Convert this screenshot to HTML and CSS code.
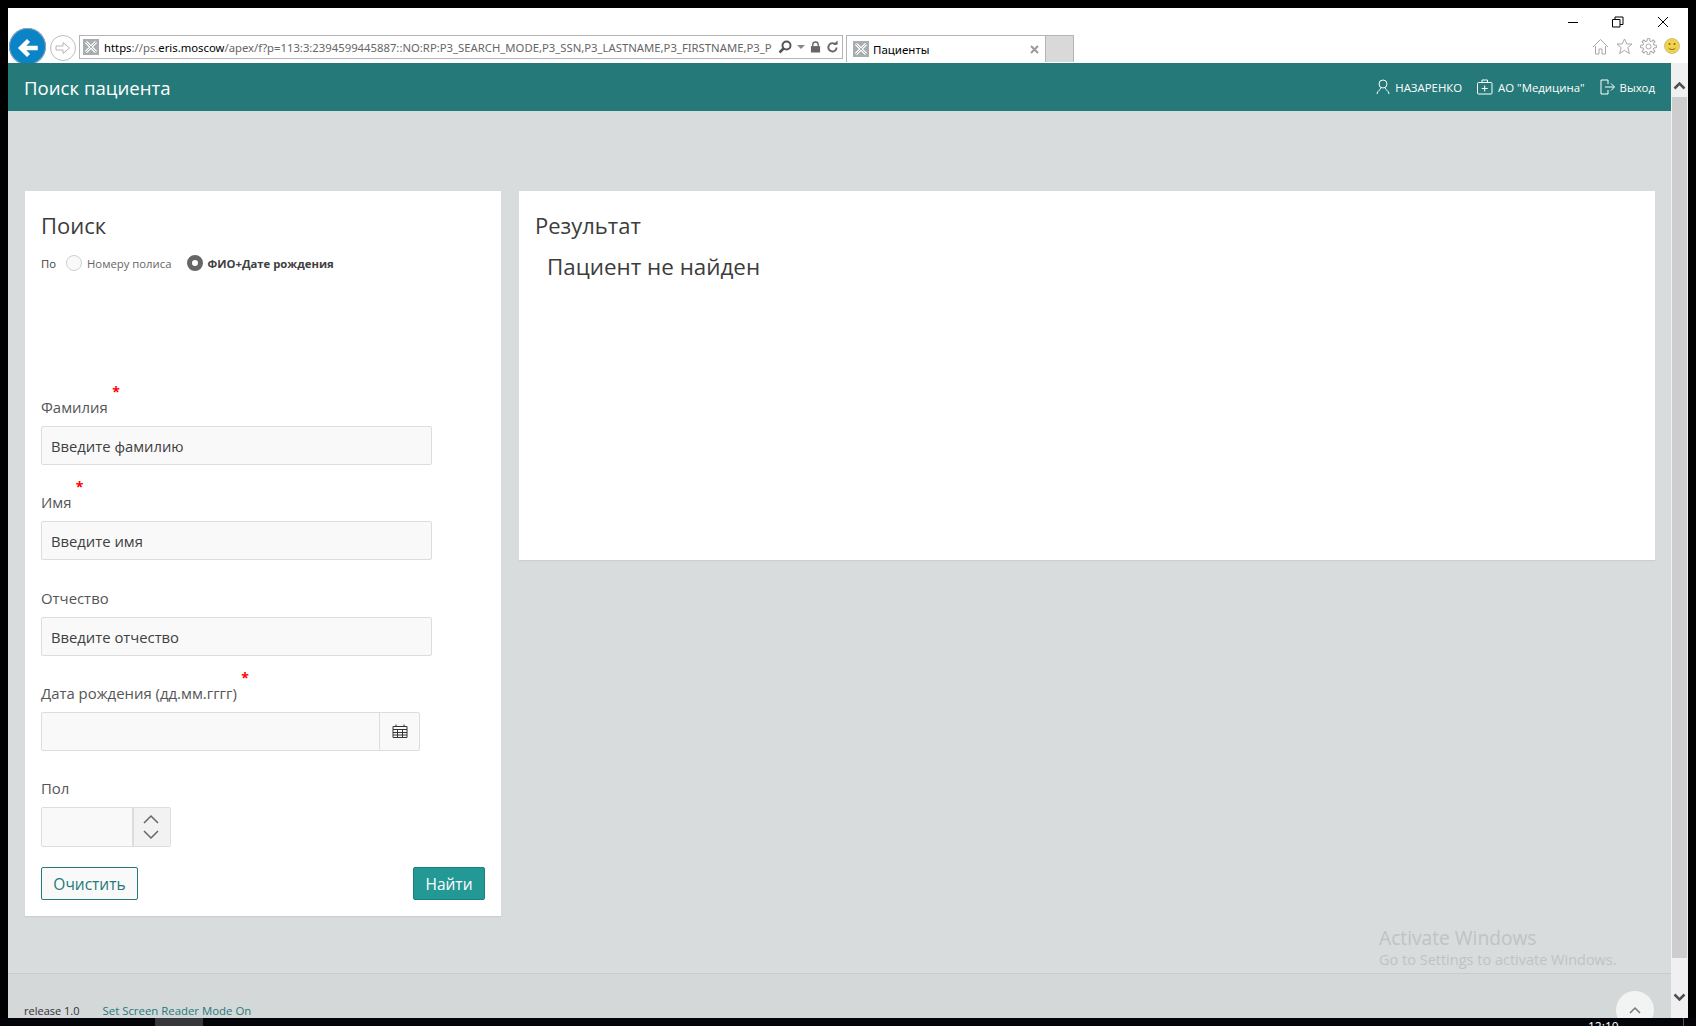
FILE: index.html
```html
<!DOCTYPE html>
<html>

<head>
    <meta charset="utf-8">
    <title>Пациенты</title>
    <link rel="stylesheet" href="styles.css">
</head>

<body>
    <div class="window">
        <div class="chrome">
            <div class="win-controls">
                <svg width="12" height="12" viewBox="0 0 12 12"><path d="M1 6.5h10" stroke="#000" fill="none"/></svg>
                <svg width="12" height="12" viewBox="0 0 12 12"><path d="M.5 3.5h7.5v7.5h-7.5zM3 3V1h8v7.5H8" stroke="#000" fill="none"/></svg>
                <svg width="12" height="12" viewBox="0 0 12 12"><path d="M1 1l10 10M11 1L1 11" stroke="#000" fill="none"/></svg>
            </div>
            <div class="nav-row">
                <div class="nav-back">
                    <svg width="26" height="26" viewBox="0 0 24 24"><path d="M21 12H6M12.5 5l-7 7 7 7" stroke="#fff" stroke-width="4" fill="none"/></svg>
                </div>
                <div class="nav-forward">
                    <svg width="18" height="14" viewBox="0 0 18 14"><path d="M2 5h7V1.500L15.500 7 9 12.500V9H2z" stroke="#b5b5b5" fill="none"/></svg>
                </div>
                <div class="address">
                    <svg class="favicon" width="16" height="16" viewBox="0 0 16 16"><rect width="16" height="16" fill="#a9adb0"/><path d="M3 3l10 10M13 3L3 13" stroke="#fff" stroke-width="3" fill="none"/><path d="M3 3l10 10M13 3L3 13" stroke="#a9adb0" fill="none"/></svg>
                    <span class="url"><b>https</b>://ps.<b>eris.moscow</b>/apex/f?p=113:3:2394599445887::NO:RP:P3_SEARCH_MODE,P3_SSN,P3_LASTNAME,P3_FIRSTNAME,P3_P</span>
                    <svg class="addr-icon" width="14" height="14" viewBox="0 0 14 14"><circle cx="8.5" cy="5.5" r="4" stroke="#555" stroke-width="2" fill="none"/><path d="M5.5 8.500L1.500 12.500" stroke="#555" stroke-width="2.5"/></svg>
                    <svg class="addr-icon" width="8" height="14" viewBox="0 0 8 14"><path d="M0 5h8L4 9z" fill="#888"/></svg>
                    <svg class="addr-icon" width="11" height="14" viewBox="0 0 12 14"><path d="M3 6V4.500a3 3 0 016 0V6" stroke="#666" stroke-width="1.5" fill="none"/><rect x="1" y="6" width="10" height="7" fill="#666"/></svg>
                    <svg class="addr-icon" width="12" height="14" viewBox="0 0 13 14"><path d="M10.5 4.500a4.500 4.500 0 101 3" stroke="#666" stroke-width="2" fill="none"/><path d="M7.5 4.500h5V0z" fill="#666"/></svg>
                </div>
                <div class="tab">
                    <svg class="favicon" width="16" height="16" viewBox="0 0 16 16"><rect width="16" height="16" fill="#a9adb0"/><path d="M3 3l10 10M13 3L3 13" stroke="#fff" stroke-width="3" fill="none"/><path d="M3 3l10 10M13 3L3 13" stroke="#a9adb0" fill="none"/></svg>
                    <span class="tab-title">Пациенты</span>
                    <svg width="9" height="9" viewBox="0 0 9 9"><path d="M1 1l7 7M8 1L1 8" stroke="#9a9a9a" stroke-width="2" fill="none"/></svg>
                </div>
                <div class="tab-new"></div>
                <div class="tools">
                    <svg width="17" height="17" viewBox="0 0 17 17"><path d="M1 9l7.500-7.500L16 9M3.5 8v8h3.500v-5h3v5h3.500V8" stroke="#a8a8a8" fill="none"/></svg>
                    <svg width="17" height="17" viewBox="0 0 17 17"><path d="M8.5 1l2.300 5h5.200l-4.200 3.600 1.600 6-4.900-3.300-4.900 3.300 1.600-6L1 6h5.200z" stroke="#a8a8a8" fill="none"/></svg>
                    <svg width="17" height="17" viewBox="0 0 17 17">
                        <defs><path id="cog-tooth" d="M-1.35-5.43L-1.25-7.9H1.25L1.35-5.43L2.88-4.79" stroke="#a8a8a8" fill="none"/></defs>
                        <g transform="translate(8.5 8.5)">
                            <use href="#cog-tooth"/>
                            <use href="#cog-tooth" transform="rotate(45)"/>
                            <use href="#cog-tooth" transform="rotate(90)"/>
                            <use href="#cog-tooth" transform="rotate(135)"/>
                            <use href="#cog-tooth" transform="rotate(180)"/>
                            <use href="#cog-tooth" transform="rotate(225)"/>
                            <use href="#cog-tooth" transform="rotate(270)"/>
                            <use href="#cog-tooth" transform="rotate(315)"/>
                            <circle r="2.5" stroke="#a8a8a8" fill="none"/>
                        </g>
                    </svg>
                    <svg width="16" height="16" viewBox="0 0 16 16"><circle cx="8" cy="8" r="7.5" fill="#f2d24b" stroke="#c9c08a"/><circle cx="5.5" cy="6" r="1" fill="#7a6a20"/><circle cx="10.5" cy="6" r="1" fill="#7a6a20"/><path d="M4.500 10c2 2 5 2 7 0" stroke="#7a6a20" fill="none"/></svg>
                </div>
            </div>
        </div>

        <div class="viewport">
            <div class="page">
                <header class="app-header">
                    <div class="app-title">Поиск пациента</div>
                    <nav class="app-nav">
                        <a class="app-link">
                            <svg width="14" height="16" viewBox="0 0 14 16"><circle cx="7" cy="5" r="4" stroke="#fff" fill="none"/><path d="M5 8.500c0 2.500-4 3-4 6.500M9 8.500c0 2.500 4 3 4 6.500" stroke="#fff" fill="none"/></svg>
                            НАЗАРЕНКО
                        </a>
                        <a class="app-link">
                            <svg width="16" height="16" viewBox="0 0 16 16"><rect x=".5" y="3.500" width="14.5" height="11.5" rx="1" stroke="#fff" fill="none"/><path d="M5 3.500V1h5.500v2.500M7.700 6.500v6M4.700 9.500h6" stroke="#fff" fill="none"/></svg>
                            АО "Медицина"
                        </a>
                        <a class="app-link">
                            <svg width="15" height="16" viewBox="0 0 15 16"><path d="M8 5V1H1v14h7v-4M5 8h9M11 4.500L14.500 8 11 11.500" stroke="#fff" fill="none"/></svg>
                            Выход
                        </a>
                    </nav>
                </header>

                <main class="content">
                    <section class="card card-search">
                        <h2 class="card-title">Поиск</h2>
                        <div class="mode-row">
                            <span class="mode-label">По</span>
                            <span class="radio"></span>
                            <span class="radio-text">Номеру полиса</span>
                            <span class="radio radio-on"></span>
                            <span class="radio-text radio-text-on">ФИО+Дате рождения</span>
                        </div>
                        <div class="field field-first">
                            <label class="field-label">Фамилия<span class="req">*</span></label>
                            <div class="text-input">Введите фамилию</div>
                        </div>
                        <div class="field">
                            <label class="field-label">Имя<span class="req">*</span></label>
                            <div class="text-input">Введите имя</div>
                        </div>
                        <div class="field">
                            <label class="field-label">Отчество</label>
                            <div class="text-input">Введите отчество</div>
                        </div>
                        <div class="field">
                            <label class="field-label">Дата рождения (дд.мм.гггг)<span class="req">*</span></label>
                            <div class="date-input">
                                <div class="date-box"></div>
                                <div class="date-btn">
                                    <svg width="16" height="14" viewBox="0 0 16 14"><path d="M1 2.500h14v11H1zM1 5.500h14M1 8.500h14M1 11h14M5.500 5.500v8M10.500 5.500v8M4 .5v2M12 .5v2" stroke="#333" fill="none"/></svg>
                                </div>
                            </div>
                        </div>
                        <div class="field">
                            <label class="field-label">Пол</label>
                            <div class="select-input">
                                <div class="select-box"></div>
                                <div class="select-btn">
                                    <svg width="16" height="26" viewBox="0 0 16 26"><path d="M1 9l7-7 7 7M1 17l7 7 7-7" stroke="#666" stroke-width="1.5" fill="none"/></svg>
                                </div>
                            </div>
                        </div>
                        <div class="actions">
                            <button class="btn btn-clear">Очистить</button>
                            <button class="btn btn-find">Найти</button>
                        </div>
                    </section>

                    <section class="card card-result">
                        <h2 class="card-title">Результат</h2>
                        <div class="not-found">Пациент не найден</div>
                    </section>
                </main>

                <div class="activate">
                    <div class="activate-title">Activate Windows</div>
                    <div class="activate-text">Go to Settings to activate Windows.</div>
                </div>

                <footer class="footer">
                    <span class="release">release 1.0</span>
                    <a class="reader-link">Set Screen Reader Mode On</a>
                    <div class="to-top">
                        <svg width="12" height="8" viewBox="0 0 12 8"><path d="M1 7l5-5 5 5" stroke="#777" stroke-width="1.5" fill="none"/></svg>
                    </div>
                </footer>
            </div>

            <div class="scrollbar">
                <svg class="scroll-arrow arrow-up" width="13" height="9" viewBox="0 0 13 9"><path d="M1.500 7.500l5-5 5 5" stroke="#505050" stroke-width="2.5" fill="none"/></svg>
                <div class="scroll-thumb"></div>
                <svg class="scroll-arrow arrow-down" width="13" height="9" viewBox="0 0 13 9"><path d="M1.500 1.500l5 5 5-5" stroke="#505050" stroke-width="2.5" fill="none"/></svg>
            </div>
        </div>
    </div>

    <div class="taskbar">
        <div class="task-item"></div>
        <div class="clock">12:10</div>
        <div class="task-edge"></div>
    </div>
</body>

</html>
```

FILE: styles.css
```css
html,
body {
    margin: 0;
    height: 100%;
    overflow: hidden;
}

body {
    background: #000;
    font-family: "Open Sans", "Noto Sans", sans-serif;
    color: #404040;
    display: flex;
    flex-direction: column;
    height: 1026px;
    padding-top: 8px;
    box-sizing: border-box;
}

.window {
    margin: 0 8px;
    height: 1010px;
    display: flex;
    flex-direction: column;
    background: #fff;
    overflow: hidden;
}

/* browser chrome */
.chrome {
    height: 55px;
    flex: none;
    position: relative;
    overflow: hidden;
    background: #fff;
    font-family: "Noto Sans", sans-serif;
}

.win-controls {
    position: absolute;
    top: 8px;
    right: 19px;
    display: flex;
    gap: 33px;
}

.nav-row {
    display: flex;
    align-items: flex-start;
    padding: 20px 0 0 1px;
}

.nav-back {
    width: 37px;
    height: 37px;
    padding-top: 3px;
    box-sizing: border-box;
    border-radius: 50%;
    background: #0a84c6;
    display: flex;
    align-items: center;
    justify-content: center;
    flex: none;
    box-shadow: inset 0 0 0 1px #8fa9b8;
}

.nav-forward {
    width: 26px;
    height: 26px;
    margin: 7px 0 0 4px;
    box-sizing: border-box;
    border: 1px solid #bdbdbd;
    border-radius: 50%;
    display: flex;
    align-items: center;
    justify-content: center;
    flex: none;
}

.address {
    width: 764px;
    height: 24px;
    margin: 7px 0 0 3px;
    box-sizing: border-box;
    border: 1px solid #b4b4b4;
    display: flex;
    align-items: center;
    gap: 5px;
    padding: 0 4px 0 3px;
    flex: none;
    overflow: hidden;
}

.favicon {
    flex: none;
}

.url {
    flex: 1;
    width: 0;
    font-size: 11.3px;
    color: #666;
    white-space: nowrap;
    overflow: hidden;
}

.url b {
    font-weight: 400;
    color: #000;
}

.addr-icon {
    flex: none;
}

.tab {
    width: 200px;
    height: 27px;
    margin: 7px 0 0 3px;
    box-sizing: border-box;
    border: 1px solid #b4b4b4;
    border-bottom: 0;
    display: flex;
    align-items: center;
    padding: 0 6px;
    gap: 4px;
    flex: none;
}

.tab-title {
    flex: 1;
    font-size: 11.5px;
    color: #000;
}

.tab-new {
    width: 28px;
    height: 27px;
    margin-top: 7px;
    box-sizing: border-box;
    background: #d9d9d9;
    border: 1px solid #b4b4b4;
    border-bottom: 0;
    border-left: 0;
    flex: none;
}

.tools {
    margin: 10px 0 0 auto;
    padding-right: 8px;
    display: flex;
    gap: 7px;
}

/* page */
.viewport {
    flex: 1;
    display: flex;
    min-height: 0;
}

.page {
    flex: 1;
    position: relative;
    display: flex;
    flex-direction: column;
    background: #d8dcdd;
    min-width: 0;
}

.app-header {
    height: 48px;
    flex: none;
    background: #257a79;
    color: #fff;
    display: flex;
    align-items: center;
    justify-content: space-between;
    padding: 0 16px;
}

.app-title {
    font-size: 18.6px;
}

.app-nav {
    display: flex;
    gap: 15px;
}

.app-link {
    display: flex;
    align-items: center;
    gap: 5px;
    font-size: 11.4px;
}

.content {
    flex: 1;
    display: flex;
    align-items: flex-start;
    gap: 18px;
    padding: 80px 16px 0 17px;
}

.card {
    background: #fff;
    box-sizing: border-box;
    padding: 18px 16px 16px;
    box-shadow: 0 1px 1px rgba(0, 0, 0, .06);
}

.card-search {
    width: 476px;
    height: 725px;
    flex: none;
}

.card-result {
    flex: 1;
    height: 369px;
}

.card-title {
    margin: 0;
    font-size: 22px;
    font-weight: 400;
    line-height: 33px;
    color: #3c3c3c;
}

.mode-row {
    display: flex;
    align-items: center;
    height: 18px;
    margin-top: 12px;
    font-size: 11.3px;
}

.mode-label {
    margin-right: 10px;
}

.radio {
    width: 16px;
    height: 16px;
    box-sizing: border-box;
    border: 1px solid #cfcfcf;
    border-radius: 50%;
    background: #f9f9f9;
    margin-right: 5px;
}

.radio-on {
    border: 5px solid #666;
    background: #fff;
    margin-right: 4px;
}

.radio-text {
    margin-right: 16px;
    color: #666;
}

.radio-text-on {
    font-weight: 700;
    color: #404040;
}

.field {
    margin-top: 25.3px;
}

.field-first {
    margin-top: 123px;
}

.field-label {
    display: block;
    position: relative;
    width: max-content;
    height: 23px;
    line-height: 25px;
    margin-bottom: 8px;
    font-size: 14.9px;
    color: #555;
}

.req {
    position: absolute;
    right: -12px;
    top: -16px;
    color: #f00;
    font-size: 14px;
    font-weight: 700;
}

.text-input {
    width: 391px;
    height: 39px;
    box-sizing: border-box;
    border: 1px solid #ddd;
    border-radius: 2px;
    background: #f9f9f9;
    padding-left: 9px;
    font-size: 14.8px;
    line-height: 38px;
    color: #404040;
}

.date-input,
.select-input {
    display: flex;
    height: 39px;
    box-sizing: border-box;
    border: 1px solid #ddd;
    border-radius: 2px;
    background: #f9f9f9;
}

.date-input {
    width: 379px;
}

.date-box,
.select-box {
    flex: 1;
}

.date-btn {
    width: 39px;
    border-left: 1px solid #ddd;
    display: flex;
    align-items: center;
    justify-content: center;
}

.select-input {
    width: 130px;
    height: 40px;
}

.select-btn {
    width: 34px;
    padding-right: 2px;
    border-left: 2px solid #ddd;
    background: #f2f2f2;
    display: flex;
    align-items: center;
    justify-content: center;
}

.actions {
    display: flex;
    justify-content: space-between;
    margin-top: 20px;
}

.btn {
    height: 33px;
    font: inherit;
    font-size: 15.5px;
    border-radius: 2px;
    padding: 0;
}

.btn-clear {
    width: 97px;
    background: #f9f9f9;
    border: 1px solid #257a79;
    color: #257a79;
}

.btn-find {
    width: 72px;
    background: #239996;
    border: 1px solid #1f7d7b;
    color: #fff;
}

.not-found {
    margin: 9px 0 0 12px;
    font-size: 22.4px;
    color: #3c3c3c;
}

.activate {
    position: absolute;
    left: 1371px;
    top: 862px;
    color: #bfc3c4;
    pointer-events: none;
}

.activate-title {
    font-size: 19.2px;
    line-height: 25px;
}

.activate-text {
    font-size: 14.5px;
    line-height: 19px;
}

.footer {
    height: 45px;
    flex: none;
    box-sizing: border-box;
    background: #d4d8d9;
    border-top: 1px solid #c8cccd;
    display: flex;
    align-items: flex-end;
    gap: 23px;
    padding: 0 16px;
    position: relative;
    overflow: hidden;
    line-height: 15px;
}

.release {
    color: #333;
    font-size: 11px;
}

.reader-link {
    color: #257a79;
    font-size: 11.4px;
}

.to-top {
    position: absolute;
    right: 17px;
    top: 17px;
    width: 38px;
    height: 38px;
    border-radius: 50%;
    background: #f2f3f3;
    display: flex;
    justify-content: center;
    padding-top: 15px;
    box-sizing: border-box;
}

.scrollbar {
    width: 17px;
    flex: none;
    background: #f0f0f0;
    display: flex;
    flex-direction: column;
    align-items: center;
}

.scroll-arrow {
    flex: none;
}

.arrow-up {
    margin: 18px 0 7px;
}

.arrow-down {
    margin: 0 0 16px;
}

.scroll-thumb {
    width: 15px;
    flex: 1;
    background: #cdcdcd;
    margin-bottom: 35px;
}

.taskbar {
    height: 8px;
    flex: none;
    position: relative;
    overflow: hidden;
    background: #02040a;
}

.task-item {
    position: absolute;
    left: 155px;
    top: 0;
    width: 48px;
    height: 8px;
    background: #36373c;
}

.clock {
    position: absolute;
    left: 1588px;
    top: 2px;
    font-size: 12px;
    line-height: 14px;
    color: #fff;
}

.task-edge {
    position: absolute;
    left: 1683px;
    top: 0;
    width: 1px;
    height: 8px;
    background: #555;
}
```
